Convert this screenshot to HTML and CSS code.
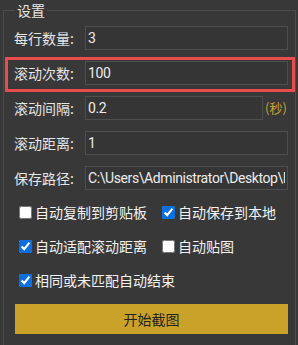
FILE: index.html
```html
<!DOCTYPE html>
<html lang="zh-CN">
<head>
    <meta charset="UTF-8">
    <meta name="viewport" content="width=device-width, initial-scale=1.0">
    <title>设置</title>
    <link rel="stylesheet" href="styles.css">
</head>
<body>

    <fieldset class="settings">
        <legend>设置</legend>

        <div class="row">
            <label for="perRow">每行数量:</label>
            <input type="text" id="perRow" value="3">
        </div>

        <div class="row marked">
            <label for="scrollCount">滚动次数:</label>
            <input type="text" id="scrollCount" value="100">
        </div>

        <div class="row">
            <label for="scrollDelay">滚动间隔:</label>
            <input type="text" id="scrollDelay" class="short" value="0.2">
            <span class="unit">(秒)</span>
        </div>

        <div class="row">
            <label for="scrollDist">滚动距离:</label>
            <input type="text" id="scrollDist" value="1">
        </div>

        <div class="row">
            <label for="savePath">保存路径:</label>
            <input type="text" id="savePath" value="C:\Users\Administrator\Desktop\h">
        </div>

        <div class="checks">
            <label class="check"><input type="checkbox"> 自动复制到剪贴板</label>
            <label class="check"><input type="checkbox" checked> 自动保存到本地</label>
            <label class="check"><input type="checkbox" checked> 自动适配滚动距离</label>
            <label class="check"><input type="checkbox"> 自动贴图</label>
            <label class="check wide"><input type="checkbox" checked> 相同或未匹配自动结束</label>
        </div>

        <button type="button">开始截图</button>
    </fieldset>

</body>
</html>
```

FILE: styles.css
```css
body {
    margin: 0;
    background-color: #383838;
    color: #e6e6e6;
    font-family: "Noto Sans CJK SC", "Noto Sans", sans-serif;
    font-size: 14px;
}

.settings {
    margin: 0 2px 0 3px;
    padding: 0 0 12px 0;
    border: 1px solid #4c4c4c;
}

.settings legend {
    margin-left: 11px;
    padding: 0 2px;
    line-height: 20px;
}

.row {
    position: relative;
    display: flex;
    align-items: center;
    height: 35px;
    padding: 0 6px 0 10px;
}

.row label {
    width: 71px;
    flex-shrink: 0;
}

.row input[type="text"] {
    width: 203px;
    height: 24px;
    padding: 0 2px;
    border: 1px solid #4e4e4e;
    background-color: #353535;
    color: #ececec;
    font-family: Roboto, "Noto Sans CJK SC", sans-serif;
    font-size: 14px;
    letter-spacing: -0.4px;
    box-sizing: border-box;
    outline: none;
}

.row input.short {
    width: 178px;
}

.unit {
    margin-left: 2px;
    color: #c9a031;
    font-size: 13px;
}

/* 高亮框 */
.marked::after {
    content: "";
    position: absolute;
    top: 2px;
    bottom: -2px;
    left: 1px;
    right: 0;
    border: 3px solid #e84c4c;
    pointer-events: none;
}

.checks {
    display: grid;
    grid-template-columns: 143px auto;
    padding-left: 11px;
}

.check {
    display: flex;
    align-items: center;
    height: 34px;
    white-space: nowrap;
    color: #f2f2f2;
}

.check.wide {
    grid-column: 1 / 3;
}

.check input {
    width: 13px;
    height: 13px;
    margin: 0 3px 0 4px;
    accent-color: #0b6fe0;
}

button {
    display: block;
    width: 273px;
    height: 30px;
    margin: 7px 0 0 11px;
    border: none;
    background-color: #caa22a;
    color: #222;
    font-family: inherit;
    font-size: 14px;
    cursor: pointer;
}
```
